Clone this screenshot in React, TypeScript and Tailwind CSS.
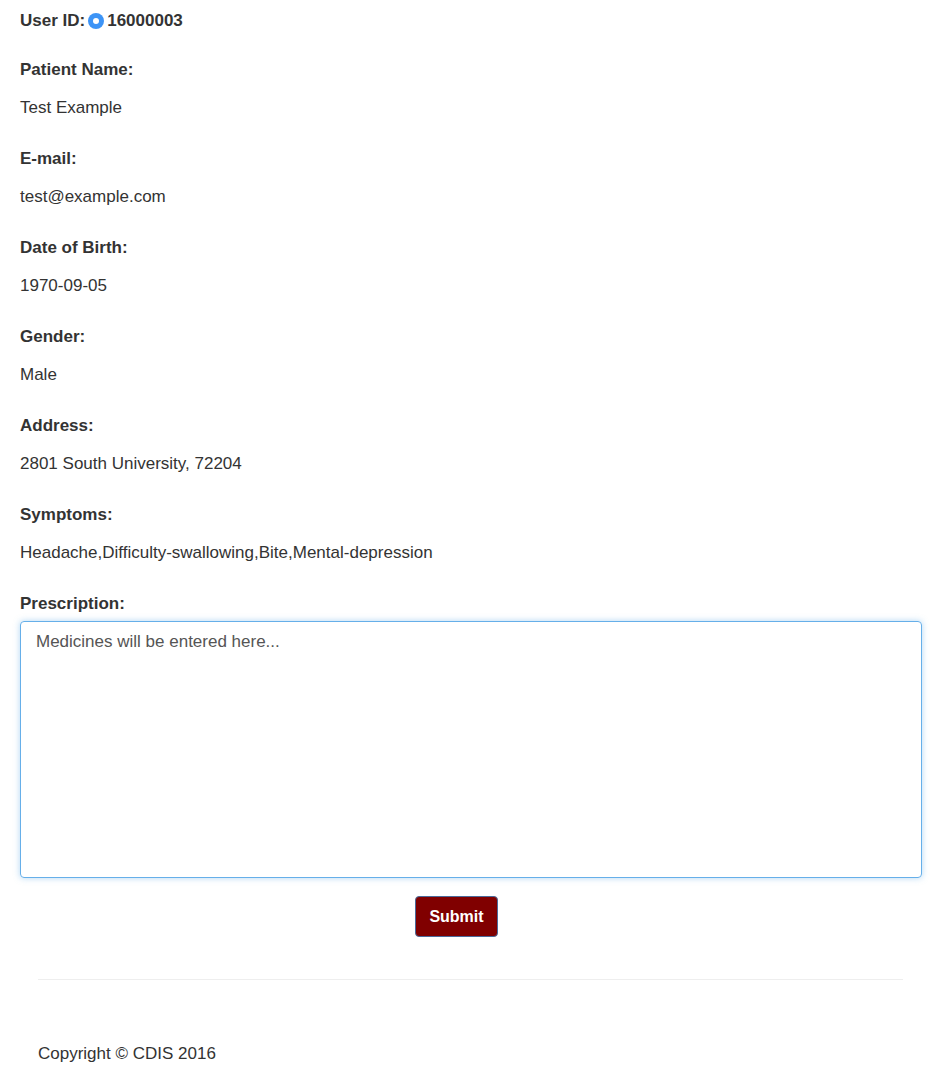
const fields = [
  { label: "Patient Name:", value: "Test Example" },
  { label: "E-mail:", value: "test@example.com" },
  { label: "Date of Birth:", value: "1970-09-05" },
  { label: "Gender:", value: "Male" },
  { label: "Address:", value: "2801 South University, 72204" },
  { label: "Symptoms:", value: "Headache,Difficulty-swallowing,Bite,Mental-depression" },
];

export default function App() {
  return (
    <div className="min-h-screen bg-white text-[#333333] font-['Liberation_Sans',Arial,sans-serif] text-[17px]">
      <div className="pl-[20px] pr-[17px] pt-[10px]">
        {/* User id */}
        <div className="flex items-center h-[22px] font-bold">
          <span>User ID:</span>
          <span className="mx-[3px] w-[16px] h-[16px] rounded-full bg-[#3d94f6] flex items-center justify-center">
            <span className="w-[6px] h-[6px] rounded-full bg-white" />
          </span>
          <span>16000003</span>
        </div>

        {/* Patient fields */}
        {fields.map((f, i) => (
          <div key={f.label} className={i === 0 ? "mt-[27px]" : "mt-[29px]"}>
            <p className="font-bold leading-[22px]">{f.label}</p>
            <p className="mt-[16px] leading-[22px]">{f.value}</p>
          </div>
        ))}

        {/* Prescription */}
        <div className="mt-[29px]">
          <label className="block font-bold leading-[22px]">Prescription:</label>
          <textarea
            defaultValue="Medicines will be entered here..."
            className="mt-[6px] block w-full h-[257px] resize-none rounded-[4px] border border-[#66afe9] px-[15px] pt-[9px] pb-[8px] text-[17px] leading-[22px] text-[#555555] outline-none shadow-[0_0_6px_rgba(102,175,233,0.5)]"
          />
        </div>

        <div className="flex justify-center mt-[18px] pr-[29px]">
          <button className="w-[83px] h-[41px] rounded-[4px] bg-[#800000] border border-[#4a6a9a] text-white font-bold text-[16px]">
            Submit
          </button>
        </div>
      </div>

      {/* Footer */}
      <footer className="pl-[38px] pr-[36px] mt-[42px]">
        <hr className="border-t border-[#eeeeee]" />
        <p className="mt-[63px] leading-[22px]">Copyright © CDIS 2016</p>
      </footer>
    </div>
  );
}
